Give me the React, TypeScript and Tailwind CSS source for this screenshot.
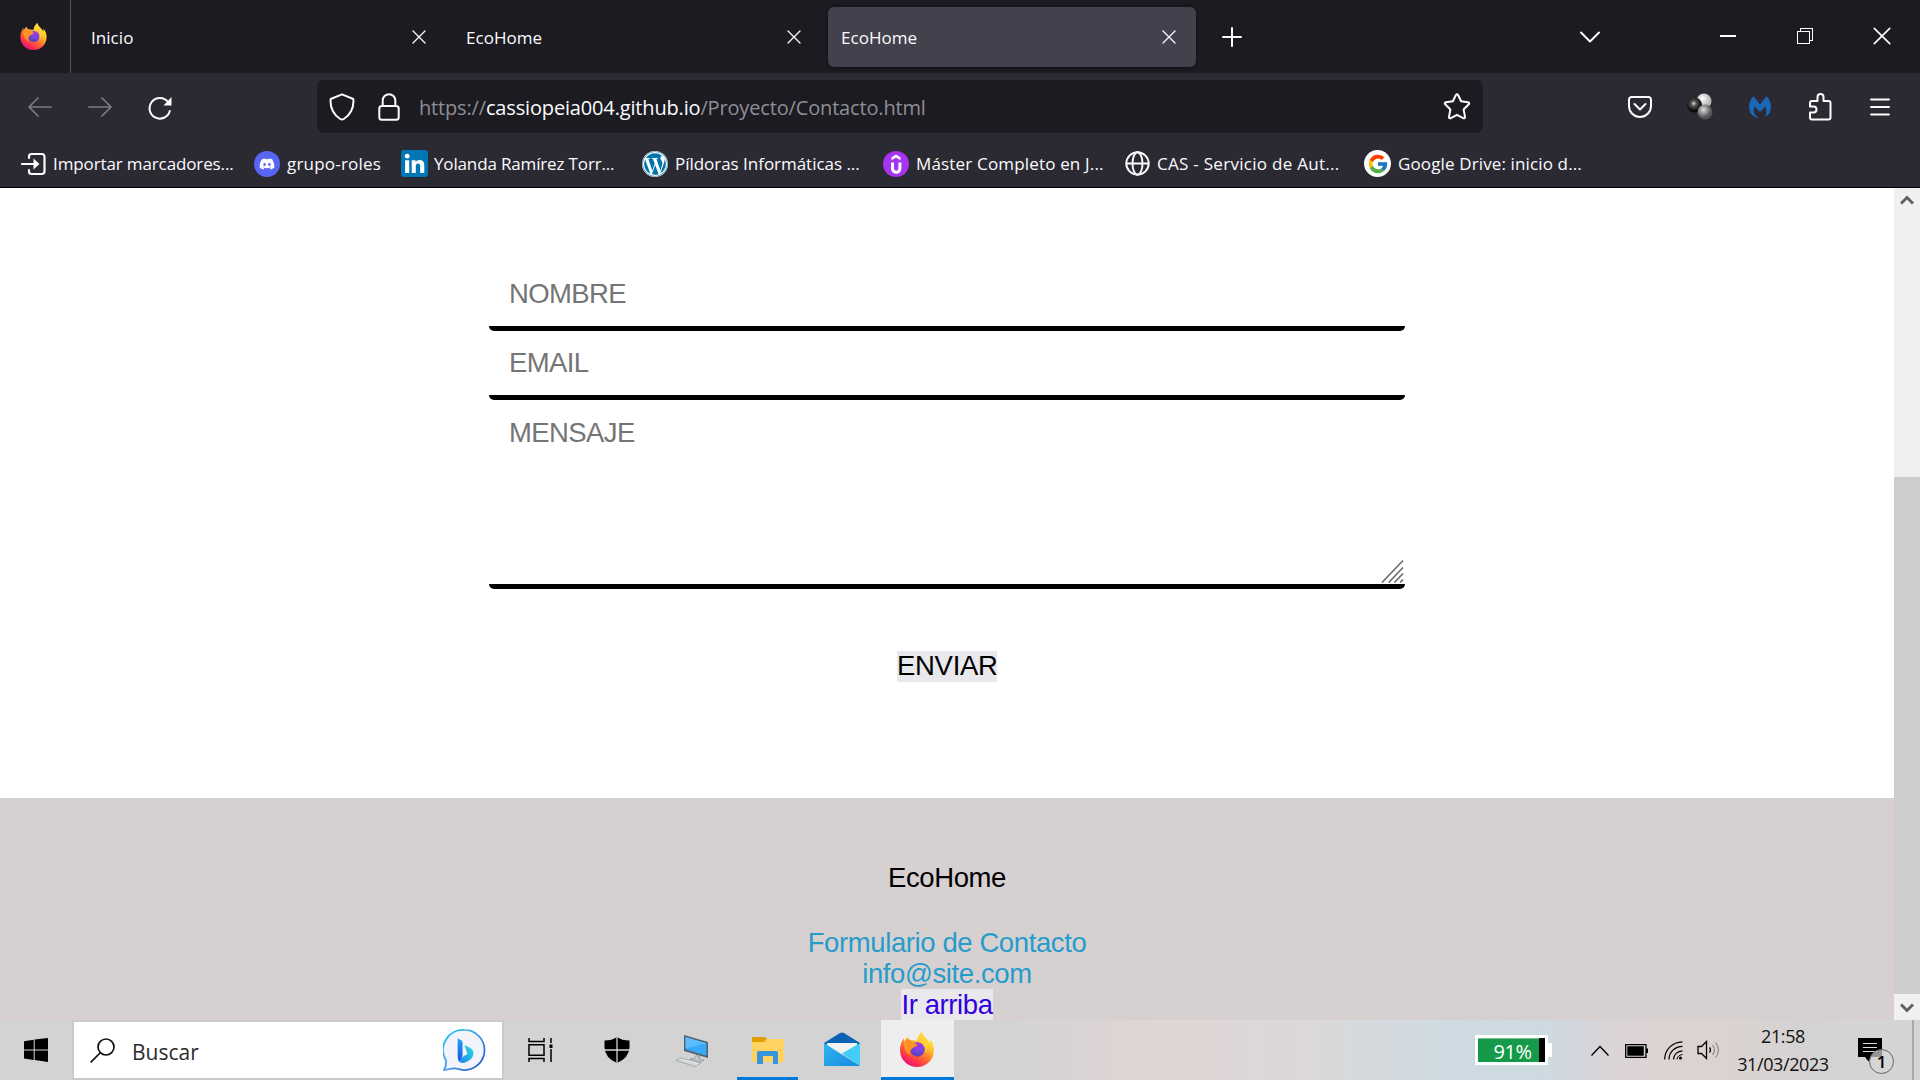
import React from "react";
import { FaDiscord, FaWordpress } from "react-icons/fa";
import { FcGoogle } from "react-icons/fc";

const stroke = { fill: "none", stroke: "currentColor", strokeLinecap: "round", strokeLinejoin: "round" } as const;

function Firefox({ id, className }: { id: string; className: string }) {
  return (
    <svg viewBox="0 0 34 35" className={className}>
      <defs>
        <linearGradient id={id + "a"} x1="0.85" y1="0.1" x2="0.3" y2="1">
          <stop offset="0" stopColor="#fff14d" />
          <stop offset="0.3" stopColor="#ffc32a" />
          <stop offset="0.6" stopColor="#ff6a2f" />
          <stop offset="0.82" stopColor="#ff2f50" />
          <stop offset="1" stopColor="#e0127f" />
        </linearGradient>
        <radialGradient id={id + "b"} cx="0.6" cy="0.15" r="0.9">
          <stop offset="0" stopColor="#a833e6" />
          <stop offset="0.5" stopColor="#7a45e0" />
          <stop offset="1" stopColor="#4d42b4" />
        </radialGradient>
      </defs>
      <path fill={"url(#" + id + "a)"} d="M22 0c-2 2-5 5-5 9l-6-1C9 8 8 6 8 5 6 6 5 8 4.500 10 4 9 4 7 4 6 1 10 0 14 0 18c0 10 8 17 17 17s17-7 17-17c0-5-2-9-4.500-11 .5 1 .7 3 .5 4C28 7 23 5 22 0z" />
      <circle cx="17.500" cy="17.500" r="7.200" fill={"url(#" + id + "b)"} />
      <path fill="#ff9226" d="M4 10c2-2 5-2 7-1 2 2 4 2.500 6.500 3.500-1 2-2.500 2.500-4 3-1.500 1-2 1.500-2.500 2.500-2 1-1 4 0 6C6 22 3 16 4 10z" />
      <path fill="#ffd23a" opacity="0.75" d="M22 0c-2 2-5 5-4.500 9 6 1 9 6 7 12 4-3 5-9 2-13-2-3-4-5-4.500-8z" />
    </svg>
  );
}

function Cross({ className }: { className: string }) {
  return (
    <svg viewBox="0 0 14 14" className={className}>
      <path {...stroke} strokeWidth="1.300" d="M1 1l12 12M13 1L1 13" />
    </svg>
  );
}

function Tab({ title, active }: { title: string; active?: boolean }) {
  return (
    <div className={active ? "ml-[4px] flex h-[60px] w-[368px] items-center justify-between rounded-[6px] bg-[#42414d] pr-[20px] pl-[13px] shadow-[0_0_4px_rgba(0,0,0,0.5)]" : "flex h-[60px] w-[375px] items-center justify-between pr-[20px] pl-[20px]"}>
      <span className="pt-[3px] text-[17px] tracking-[0.05px] text-[#fbfbfe]">{title}</span>
      <Cross className="h-[14px] w-[14px]" />
    </div>
  );
}

function TabStrip() {
  return (
    <div className="flex h-[73px] items-center bg-[#1c1b22] text-[#fbfbfe]">
      <div className="flex h-full w-[71px] items-center border-r border-[#55545c] pl-[20px]">
        <Firefox id="ft" className="h-[27px] w-[27px]" />
      </div>
      <Tab title="Inicio" />
      <Tab title="EcoHome" />
      <div className="w-[3px]" />
      <Tab title="EcoHome" active />
      <svg viewBox="0 0 20 20" className="mt-[1px] ml-[26px] h-[20px] w-[20px]">
        <path {...stroke} strokeWidth="2" d="M10 1v18M1 10h18" />
      </svg>
      <div className="ml-auto flex items-center">
        <svg viewBox="0 0 20 12" className="mr-[120px] h-[12px] w-[20px]">
          <path {...stroke} strokeWidth="2" d="M1 1.500l9 9 9-9" />
        </svg>
        <div className="mr-[61px] mb-[2px] h-[2px] w-[16px] bg-white" />
        <svg viewBox="0 0 16 16" className="mr-[60px] mb-[1px] h-[16px] w-[16px]" shapeRendering="crispEdges">
          <path fill="none" stroke="#fff" strokeWidth="1.400" d="M0.700 3.700h11.600v11.600H0.700zM3.700 3.700V0.700h11.600v11.600h-3" />
        </svg>
        <Cross className="mr-[29px] mb-[1px] h-[18px] w-[18px]" />
      </div>
    </div>
  );
}

function Toolbar() {
  return (
    <div className="flex h-[67px] items-center pl-[28px] text-[#fbfbfe]">
      <svg viewBox="0 0 24 20" className="mt-[1px] h-[20px] w-[24px] text-[#7c7b83]">
        <path {...stroke} strokeWidth="1.700" d="M23 10H1M10 1l-9 9 9 9" />
      </svg>
      <svg viewBox="0 0 24 20" className="mt-[1px] ml-[36px] h-[20px] w-[24px] text-[#7c7b83]">
        <path {...stroke} strokeWidth="1.700" d="M1 10h22M14 1l9 9-9 9" />
      </svg>
      <svg viewBox="0 0 24 24" className="mt-[3px] ml-[36px] h-[24px] w-[24px]">
        <path {...stroke} strokeWidth="2" d="M21.800 15A10.300 10.300 0 1 1 20 6" />
        <path fill="currentColor" d="M23.500 1v8.500h-8z" />
      </svg>
      <div className="ml-[145px] flex h-[53px] w-[1166px] items-center rounded-[7px] bg-[#1c1b22] pl-[12px]">
        <svg viewBox="0 0 26 28" className="h-[28px] w-[26px]">
          <path {...stroke} strokeWidth="2" d="M13 1.300L24.300 6c1 9-3.500 16.500-9.500 20a3.500 3.500 0 0 1-3.600 0C5.200 22.500.7 15 1.700 6z" />
        </svg>
        <svg viewBox="0 0 22 28" className="ml-[23px] h-[28px] w-[22px]">
          <rect {...stroke} strokeWidth="2" x="1.300" y="13" width="19.400" height="13.700" rx="2.500" />
          <path {...stroke} strokeWidth="2" d="M4.700 13V7.500a6.300 6.300 0 0 1 12.600 0V13" />
        </svg>
        <div className="ml-[19px] pt-[2px] text-[20px] tracking-[-0.16px] whitespace-pre text-[#8f8e96]">
          https://<span className="text-[#fbfbfe]">cassiopeia004.github.io</span>/Proyecto/Contacto.html
        </div>
        <svg viewBox="0 0 28 27" className="mr-[12px] ml-auto h-[27px] w-[28px]">
          <path {...stroke} strokeWidth="2" d="M12.900 2q1.100-1.700 2.200 0l3 6.300 7 1q1.800.5.700 2L20.600 16.500l1.400 7.400q0 1.900-1.800 1.300L14 21.800l-6.200 3.400Q6 25.800 6 23.900l1.400-7.400L2.200 11.300q-1.100-1.500.7-2l7-1z" />
        </svg>
      </div>
      <svg viewBox="0 0 24 22" className="ml-[145px] h-[22px] w-[24px]">
        <path {...stroke} strokeWidth="2" d="M3.500 1h17A2.500 2.500 0 0 1 23 3.500V10a11 11 0 0 1-22 0V3.500A2.500 2.500 0 0 1 3.500 1zM6.500 8l5.500 5.500L17.500 8" />
      </svg>
      <svg viewBox="0 0 26 27" className="ml-[35px] h-[27px] w-[26px]">
        <defs>
          <radialGradient id="bw" cx="0.4" cy="0.35"><stop offset="0" stopColor="#fff" /><stop offset="1" stopColor="#b8b8b8" /></radialGradient>
          <radialGradient id="bb" cx="0.45" cy="0.4"><stop offset="0" stopColor="#ddd" /><stop offset="0.35" stopColor="#555" /><stop offset="1" stopColor="#080808" /></radialGradient>
          <radialGradient id="bg" cx="0.4" cy="0.35"><stop offset="0" stopColor="#ddd" /><stop offset="1" stopColor="#555" /></radialGradient>
        </defs>
        <circle cx="17" cy="8" r="7.500" fill="url(#bw)" />
        <circle cx="7.500" cy="12" r="7.500" fill="url(#bb)" />
        <circle cx="18" cy="19" r="7.500" fill="url(#bg)" />
      </svg>
      <svg viewBox="0 0 22 22" className="ml-[36px] h-[22px] w-[22px]">
        <path fill="#1b66b8" d="M4.500 0L11 8.500 17.500 0C20.500 3 22 7 22 11c0 5-2.500 8.500-6 10 1.500-3.500 2-6.500.5-10.500L11 16 5.500 10.500C3.500 15 5.500 20 10.500 22 4 21.500 0 17 0 11 0 7 1.500 3 4.500 0z" />
      </svg>
      <svg viewBox="0 0 23 28" className="ml-[38px] h-[28px] w-[23px]">
        <path {...stroke} strokeWidth="2" d="M3 8h5.500V4a3 3 0 0 1 6 0v4h5A2 2 0 0 1 21.500 10v14.500a2 2 0 0 1-2 2H3a2 2 0 0 1-2-2v-5h3.500a3 3 0 0 0 0-6H1v-3.500a2 2 0 0 1 2-2z" />
      </svg>
      <svg viewBox="0 0 20 18" className="ml-[38px] h-[18px] w-[20px]">
        <path {...stroke} strokeWidth="1.800" d="M1 1.500h18M1 9h18M1 16.500h18" />
      </svg>
    </div>
  );
}

function Bookmark({ width, gap, icon, label, tracking }: { width: string; gap: string; icon: React.ReactNode; label: string; tracking: string }) {
  return (
    <div className={"flex shrink-0 items-center whitespace-nowrap " + width + " " + gap}>
      {icon}
      <span className={"text-[17px] " + tracking}>{label}</span>
    </div>
  );
}

function Bookmarks() {
  return (
    <div className="flex h-[47px] items-center pl-[21px] text-[#fbfbfe]">
      <Bookmark width="w-[233px]" gap="gap-[7px]" tracking="tracking-[-0.12px]" label="Importar marcadores..." icon={
        <svg viewBox="0 0 25 24" className="h-[24px] w-[25px]">
          <path {...stroke} strokeWidth="2.200" d="M8 6V4.500A2.500 2.500 0 0 1 10.500 2h10.500A2.500 2.500 0 0 1 23.500 4.500v15a2.500 2.500 0 0 1-2.500 2.500H10.500A2.500 2.500 0 0 1 8 19.500V18M1 12h13" />
          <path fill="currentColor" d="M12.500 6.500l6 5.500-6 5.500z" />
        </svg>} />
      <Bookmark width="w-[147px]" gap="gap-[7px]" tracking="tracking-[0.2px]" label="grupo-roles" icon={
        <span className="flex h-[26px] w-[26px] items-center justify-center rounded-full bg-[#5865f2]"><FaDiscord className="h-[16px] w-[16px]" /></span>} />
      <Bookmark width="w-[241px]" gap="gap-[6px]" tracking="tracking-[-0.15px]" label="Yolanda Ramírez Torr..." icon={
        <svg viewBox="0 0 27 27" className="h-[27px] w-[27px]">
          <rect width="27" height="27" rx="3" fill="#0077b5" />
          <circle cx="6.200" cy="6.200" r="2.400" fill="#fff" />
          <path fill="#fff" d="M4.100 10.300h4.100V23H4.100zM10.700 10.300h3.900V12c.7-1.300 2.200-2.100 4-2.100 3.700 0 4.700 2.400 4.700 5.800V23h-4.100v-6.400c0-1.700-.3-3.200-2.100-3.200-1.900 0-2.300 1.400-2.300 3.100V23h-4.100z" />
        </svg>} />
      <Bookmark width="w-[241px]" gap="gap-[7px]" tracking="tracking-[-0.03px]" label="Píldoras Informáticas ..." icon={
        <span className="flex h-[26px] w-[26px] items-center justify-center rounded-full bg-white"><FaWordpress className="h-[26px] w-[26px] text-[#0073aa]" /></span>} />
      <Bookmark width="w-[242px]" gap="gap-[7px]" tracking="tracking-[0.17px]" label="Máster Completo en J..." icon={
        <svg viewBox="0 0 26 26" className="h-[26px] w-[26px]">
          <circle cx="13" cy="13" r="13" fill="#a435f0" />
          <path fill="none" stroke="#fff" strokeWidth="3" d="M9.500 11.500v6a3.700 3.700 0 0 0 7.400 0v-6" />
          <path fill="#fff" d="M13 3.500l4.500 2.700v3L13 6.500 8.500 9.200v-3z" />
        </svg>} />
      <Bookmark width="w-[239px]" gap="gap-[7px]" tracking="tracking-[0.28px]" label="CAS - Servicio de Aut..." icon={
        <svg viewBox="0 0 25 25" className="h-[25px] w-[25px]">
          <circle cx="12.500" cy="12.500" r="11.200" {...stroke} strokeWidth="1.900" />
          <ellipse cx="12.500" cy="12.500" rx="5" ry="11.200" {...stroke} strokeWidth="1.900" />
          <path {...stroke} strokeWidth="1.900" d="M1.500 12.500h22" />
        </svg>} />
      <Bookmark width="w-[230px]" gap="gap-[7px]" tracking="tracking-[0.13px]" label="Google Drive: inicio d..." icon={
        <span className="flex h-[27px] w-[27px] items-center justify-center rounded-full bg-white"><FcGoogle className="h-[22px] w-[22px]" /></span>} />
    </div>
  );
}

function Page() {
  return (
    <div className="flex h-[832px] bg-white font-['Liberation_Sans',Arial,sans-serif] text-[27.500px] leading-[31px] tracking-[-0.400px]">
      <main className="flex w-[1894px] flex-col">
        <form className="flex h-[610px] flex-col items-center pt-[73px] tracking-[-0.600px]">
          <div className="h-[70px] w-[916px] rounded-[5px] border-b-[5px] border-black px-[20px] pt-[17px] text-[#757575]">NOMBRE</div>
          <div className="h-[69px] w-[916px] rounded-[5px] border-b-[5px] border-black px-[20px] pt-[16px] text-[#757575]">EMAIL</div>
          <div className="flex h-[189px] w-[916px] items-end justify-between rounded-[5px] border-b-[5px] border-black pr-[1px] pl-[20px] text-[#757575]">
            <span className="self-start pt-[17px]">MENSAJE</span>
            <svg viewBox="0 0 24 24" className="mb-[1px] h-[24px] w-[23px]" preserveAspectRatio="none">
              <path fill="none" stroke="#6b6b6b" strokeWidth="1.700" d="M1 23.500L23 1.500M8 23.500L23 8.500M14 23.500L23 14.500M20 23.500L23 20.500" />
            </svg>
          </div>
          <button type="button" className="mt-[62px] h-[31px] w-[100px] bg-[#e9e9ed] pb-[2px] leading-[29px] tracking-[-0.300px] whitespace-nowrap">ENVIAR</button>
        </form>
        <footer className="flex h-[222px] flex-col items-center bg-[#d6d0d0] pt-[64px]">
          <p className="text-black">EcoHome</p>
          <p className="mt-[34px] text-[#269ccc]">Formulario de Contacto</p>
          <p className="text-[#269ccc]">info@site.com</p>
          <p className="bg-[#e9e9ed] text-[#3300dd]">Ir arriba</p>
        </footer>
      </main>
      <div className="flex w-[26px] flex-col bg-[#f0f0f0] text-[#606060]">
        <div className="flex h-[26px] items-center justify-center pb-[2px]">
          <svg viewBox="0 0 14 10" className="h-[10px] w-[14px]"><path fill="none" stroke="currentColor" strokeWidth="3" d="M1 8.500l6-6 6 6" /></svg>
        </div>
        <div className="mt-[263px] h-[517px] bg-[#cdcdcd]" />
        <div className="flex h-[26px] items-center justify-center pt-[2px]">
          <svg viewBox="0 0 14 10" className="h-[10px] w-[14px]"><path fill="none" stroke="currentColor" strokeWidth="3" d="M1 1.500l6 6 6-6" /></svg>
        </div>
      </div>
    </div>
  );
}

function Taskbar() {
  return (
    <div className="flex h-[60px] items-center bg-[linear-gradient(90deg,#d3d3d3_0,#d3d3d3_1000px,#e0d5d5_1150px,#dcd8d8_1300px,#cfdbe2_1440px,#cddae2_1540px,#dbd4d5_1620px,#ddd2d2_1700px,#d5d3d2_1800px,#d5d5d5_1920px)] text-black">
      <svg viewBox="0 0 24 24" className="ml-[24px] h-[24px] w-[24px]">
        <path d="M0 3.300l9.700-1.500v9.600H0zM10.700 1.600L24 0v11.400H10.700zM0 12.400h9.700v9.500L0 20.600zM10.700 12.400H24V24l-13.300-1.900z" />
      </svg>
      <div className="ml-[24px] flex h-[60px] w-[432px] items-center border-2 border-[#c9c9c9] bg-white pl-[16px]">
        <svg viewBox="0 0 25 25" className="h-[25px] w-[25px]">
          <path fill="none" stroke="#111" strokeWidth="1.700" d="M0.700 24.300l9.800-9.800" />
          <circle cx="16" cy="9" r="8" fill="none" stroke="#111" strokeWidth="1.700" />
        </svg>
        <span className="ml-[17px] pt-[5px] text-[21px] text-[#2b2b2b]">Buscar</span>
        <svg viewBox="0 0 44 44" className="mr-[16px] ml-auto h-[44px] w-[43px]">
          <defs>
            <linearGradient id="bo" x1="0" y1="0" x2="1" y2="1"><stop offset="0" stopColor="#17c8f0" /><stop offset="0.500" stopColor="#4a9be8" /><stop offset="1" stopColor="#1a4fc4" /></linearGradient>
            <linearGradient id="bi" x1="0" y1="0" x2="0" y2="1"><stop offset="0" stopColor="#23a5f5" /><stop offset="1" stopColor="#2052e8" /></linearGradient>
            <linearGradient id="bj" x1="1" y1="0" x2="0" y2="1"><stop offset="0" stopColor="#2be0d8" /><stop offset="1" stopColor="#2080f5" /></linearGradient>
          </defs>
          <path fill="#f3f4fb" stroke="url(#bo)" strokeWidth="1.800" strokeLinejoin="round" d="M22 1.500a20.500 20.500 0 1 1 0 41c-4 0-7-1.700-10-1.700-4 0-7 1.200-11 1.700 2-3 2.500-6 2-10A20.500 20.500 0 0 1 22 1.500z" />
          <path fill="url(#bj)" d="M22 17l6 3q4 2.500 3 7-1 5-9 8-5 1-7-3l10-6z" />
          <path fill="url(#bi)" d="M15 10l3.500 2q1.500 1 1.500 3v13l-3 5q-2-1-2-4z" />
        </svg>
      </div>
      <svg viewBox="0 0 26 24" className="ml-[24px] h-[24px] w-[26px]">
        <path fill="none" stroke="#000" strokeWidth="1.500" d="M1 0v3.500h15V0M1 24v-3.500h15V24M1 6.700h15v10.600H1zM23 0v5M23 11v13" />
        <path d="M21.500 6.500h3v3.500h-3z" />
      </svg>
      <svg viewBox="0 0 26 26" className="ml-[50px] h-[26px] w-[26px]">
        <path d="M13 0q5 3.500 12.500 3.500v7Q25 21 13 26 1 21 .5 10.500v-7Q8 3.500 13 0z" />
        <path stroke="#d3d3d3" strokeWidth="1.300" d="M13 0v26M0 13h26" />
      </svg>
      <svg viewBox="0 0 33 32" className="mt-[1px] ml-[46px] h-[32px] w-[33px]">
        <path fill="#555f68" d="M8 0l24 7v16L8 16z" />
        <path fill="#38a9fb" d="M9.500 2l21 6.200v12.600l-21-6.300z" />
        <path fill="#6cc4ff" opacity="0.7" d="M9.500 2l21 6.200-21 5z" />
        <path fill="#c4cacf" stroke="#7c858c" strokeWidth="0.600" d="M20 20.500l4 1.200-1 2.500 5 1-4 1.800-10-3 5-.8z" />
        <path fill="#e3e6e8" stroke="#8f979c" strokeWidth="0.700" d="M0 25.500l5-2.500 20 5-6 3.500z" />
        <path fill="none" stroke="#a5acb1" strokeWidth="0.600" strokeDasharray="2 1" d="M3.500 25l17 4.500M2 26l17 4.500" />
      </svg>
      <div className="ml-[28px] flex h-[60px] w-[61px] items-center justify-center border-b-[3px] border-[#0078d7] pt-[4px]">
        <svg viewBox="0 0 32 27" className="h-[27px] w-[32px]">
          <path fill="#e0a004" d="M0 1q0-1 1-1h12l2 2.500L13 5H0z" />
          <path fill="#ffd262" d="M0 5h12l3-3h16q1 0 1 1v21q0 1-1 1H1q-1 0-1-1z" />
          <path fill="#3995da" d="M5 15.500q0-1.500 1.500-1.500h18q1.500 0 1.500 1.500V26q0 1-1 1h-4v-8H11v8H6q-1 0-1-1z" />
        </svg>
      </div>
      <svg viewBox="0 0 36 34" className="mb-[2px] ml-[26px] h-[34px] w-[36px]">
        <defs><linearGradient id="ml" x1="0" y1="0" x2="1" y2="1"><stop offset="0" stopColor="#30b5ee" /><stop offset="1" stopColor="#168ae0" /></linearGradient></defs>
        <path fill="#0c62b5" d="M0 11L16 1q2-1.200 4 0l16 10v4H0z" />
        <path fill="#f2f2f2" d="M3 11h30v5l-15 8L3 16z" />
        <path fill="#40cdf6" d="M36 11v23L18 21.500z" />
        <path fill="url(#ml)" d="M0 11l36 23H0z" />
      </svg>
      <div className="ml-[21px] flex h-[60px] w-[73px] items-center justify-center border-b-[3px] border-[#0078d7] bg-[#eeeeee] pt-[2px] pr-[2px]">
        <Firefox id="fb" className="h-[35px] w-[34px]" />
      </div>
      <div className="ml-auto flex h-full items-center">
        <div className="flex h-[30px] w-[73px] items-center border-[3px] border-white bg-black">
          <div className="flex h-[24px] w-[61px] items-center justify-center border-t border-[#7cc39a] bg-[#149a49] pt-[2px] pl-[8px] text-[20px] tracking-[-0.5px] text-white">91%</div>
        </div>
        <div className="h-[14px] w-[4px] bg-white" />
        <svg viewBox="0 0 18 11" className="ml-[39px] h-[11px] w-[18px]"><path fill="none" stroke="#000" strokeWidth="1.400" d="M0.500 10.500L9 1.500l8.500 9" /></svg>
        <svg viewBox="0 0 23 14" className="mt-[1px] ml-[16px] h-[14px] w-[23px]">
          <path fill="none" stroke="#000" strokeWidth="1.300" d="M0.700 0.700h20.300v12.600H0.700z" />
          <path d="M2.300 2.300h16.500v9.400H2.300zM21 4.500h2v4.500h-2z" />
        </svg>
        <svg viewBox="0 0 19 19" className="mt-[1px] ml-[16px] h-[19px] w-[19px]">
          <path fill="none" stroke="#000" strokeWidth="1.200" d="M0.700 18.500C.7 9 8 1 18.500 .8M5 18.500C5 11 11 5.500 18.500 5.300M9.500 18.500c0-5 4-8.500 9-8.700" />
          <path fill="none" stroke="#000" strokeWidth="1" d="M13 18.500c0-3 2.500-4.700 5.500-4.900" />
          <circle cx="16.500" cy="17" r="1.600" />
        </svg>
        <svg viewBox="0 0 24 20" className="ml-[14px] h-[20px] w-[24px]">
          <path fill="none" stroke="#000" strokeWidth="1.300" d="M1 6.500h3.500L9.500 1.500v17l-5-5H1zM12.500 7.500q2 2.500 0 5" />
          <path fill="none" stroke="#8a8a8a" strokeWidth="1.200" d="M15.500 5q4 5 0 10M18.500 2.500q6 7.500 0 15" />
        </svg>
        <div className="ml-[15px] flex w-[94px] flex-col items-center text-[18px] leading-[28px] tracking-[-0.4px] whitespace-nowrap text-[#111]">
          <span>21:58</span>
          <span>31/03/2023</span>
        </div>
        <div className="relative mt-[12px] ml-[28px] h-[36px] w-[36px]">
          <svg viewBox="0 0 24 24" className="h-[24px] w-[24px]">
            <path d="M0 0h24v19H13.500l-3 4.500-3.500-4.500H0z" />
            <path stroke="#ddd" strokeWidth="1" d="M5 5.500h14M5 9.500h14M5 13.500h14" />
          </svg>
          <div className="absolute top-[11px] left-[11px] flex h-[25px] w-[25px] items-center justify-center rounded-full border border-[#666] bg-[#d5d5d5]/70 text-[17px] font-semibold">1</div>
        </div>
        <div className="ml-[18px] h-full w-[8px] border-l-2 border-[#a8a8a8]" />
      </div>
    </div>
  );
}

export default function App() {
  return (
    <div className="h-[1080px] w-[1920px] overflow-hidden bg-white font-['Open_Sans','Noto_Sans',sans-serif]">
      <header className="flex h-[188px] flex-col border-b border-black bg-[#2b2a33]">
        <TabStrip />
        <Toolbar />
        <Bookmarks />
      </header>
      <Page />
      <Taskbar />
    </div>
  );
}
